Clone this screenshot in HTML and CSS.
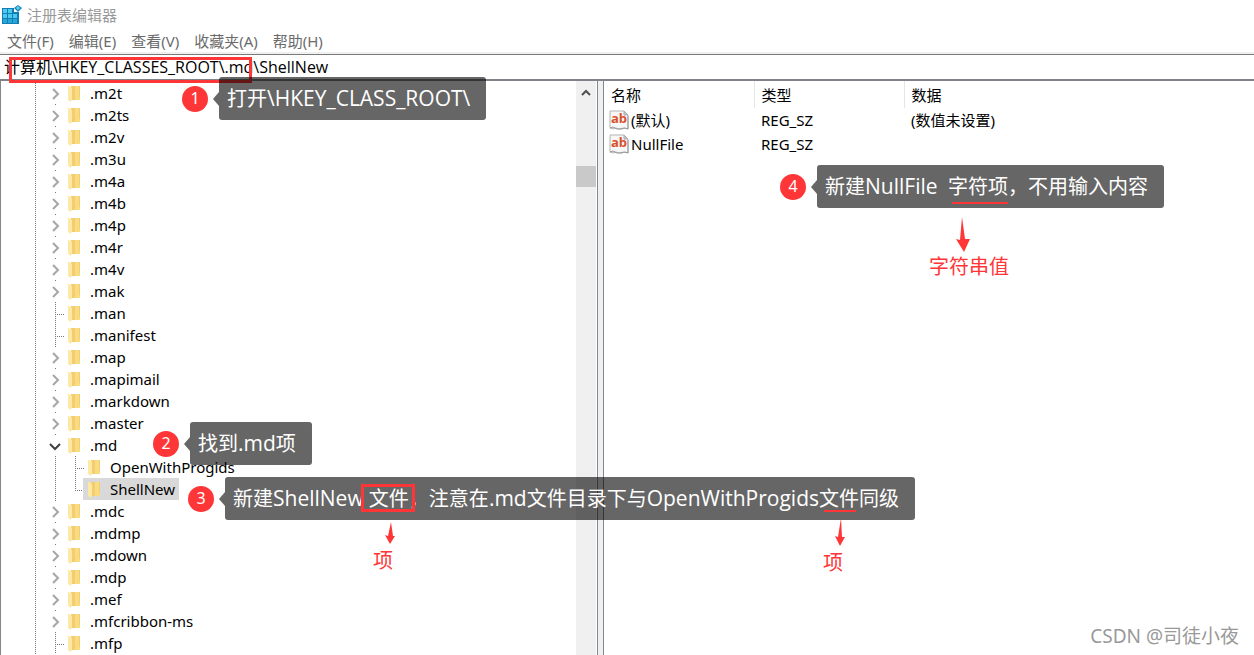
FILE: index.html
```html
<!DOCTYPE html>
<html lang="zh-CN">
<head>
    <meta charset="UTF-8">
    <meta name="viewport" content="width=device-width, initial-scale=1.0">
    <title>注册表编辑器</title>
    <link rel="stylesheet" href="styles.css">
</head>
<body>
    <svg class="symbols" aria-hidden="true">
        <symbol id="chevron" viewBox="0 0 12 12">
            <path d="M4 1l5 5-5 5" fill="none" stroke="#a6a6a6" stroke-width="2"/>
        </symbol>
        <symbol id="chevron-open" viewBox="0 0 12 12">
            <path d="M1 4l5 5 5-5" fill="none" stroke="#404040" stroke-width="2"/>
        </symbol>
        <symbol id="folder" viewBox="0 0 12 17">
            <path d="M3 1h9v14H3z" fill="#f3cd72"/>
            <path d="M7 1h4v11h1v3H7z" fill="#fadc80"/>
            <path d="M0 1h1l3 2v11l-1 3-3-2z" fill="#ffe8a2"/>
        </symbol>
    </svg>

    <div class="window">
        <header class="title-bar">
            <svg class="app-icon" viewBox="0 0 20 20" aria-hidden="true">
                <path d="M0 3h12v4h5v12H0z" fill="#0f7fb5"/>
                <path d="M1 4h4v4H1zM6 4h4v4H6zM1 9h4v4H1zM6 9h4v4H6zM11 9h4v4h-4z" fill="#4fc9ee"/>
                <path d="M1 14h4v4H1zM6 14h4v4H6zM11 14h4v4h-4z" fill="#2aa5d8"/>
                <path d="M12 3l4-3 4 3-4 4z" fill="#1788bd"/>
                <path d="M14 3l2-2 2 2-2 2z" fill="#63d0f0"/>
            </svg>
            <span>注册表编辑器</span>
        </header>
        <nav class="menu-bar">
            <button type="button">文件(F)</button>
            <button type="button">编辑(E)</button>
            <button type="button">查看(V)</button>
            <button type="button">收藏夹(A)</button>
            <button type="button">帮助(H)</button>
        </nav>
        <input class="address" type="text" aria-label="地址" value="计算机\HKEY_CLASSES_ROOT\.md\ShellNew">

        <main class="panes">
            <section class="tree-pane">
                <ul class="tree">
                    <li><div class="row"><button class="toggle"><svg><use href="#chevron"/></svg></button><svg class="folder"><use href="#folder"/></svg><span class="key">.m2t</span></div></li>
                    <li><div class="row"><button class="toggle"><svg><use href="#chevron"/></svg></button><svg class="folder"><use href="#folder"/></svg><span class="key">.m2ts</span></div></li>
                    <li><div class="row"><button class="toggle"><svg><use href="#chevron"/></svg></button><svg class="folder"><use href="#folder"/></svg><span class="key">.m2v</span></div></li>
                    <li><div class="row"><button class="toggle"><svg><use href="#chevron"/></svg></button><svg class="folder"><use href="#folder"/></svg><span class="key">.m3u</span></div></li>
                    <li><div class="row"><button class="toggle"><svg><use href="#chevron"/></svg></button><svg class="folder"><use href="#folder"/></svg><span class="key">.m4a</span></div></li>
                    <li><div class="row"><button class="toggle"><svg><use href="#chevron"/></svg></button><svg class="folder"><use href="#folder"/></svg><span class="key">.m4b</span></div></li>
                    <li><div class="row"><button class="toggle"><svg><use href="#chevron"/></svg></button><svg class="folder"><use href="#folder"/></svg><span class="key">.m4p</span></div></li>
                    <li><div class="row"><button class="toggle"><svg><use href="#chevron"/></svg></button><svg class="folder"><use href="#folder"/></svg><span class="key">.m4r</span></div></li>
                    <li><div class="row"><button class="toggle"><svg><use href="#chevron"/></svg></button><svg class="folder"><use href="#folder"/></svg><span class="key">.m4v</span></div></li>
                    <li><div class="row"><button class="toggle"><svg><use href="#chevron"/></svg></button><svg class="folder"><use href="#folder"/></svg><span class="key">.mak</span></div></li>
                    <li><div class="row"><span class="branch"></span><svg class="folder"><use href="#folder"/></svg><span class="key">.man</span></div></li>
                    <li><div class="row"><span class="branch"></span><svg class="folder"><use href="#folder"/></svg><span class="key">.manifest</span></div></li>
                    <li><div class="row"><button class="toggle"><svg><use href="#chevron"/></svg></button><svg class="folder"><use href="#folder"/></svg><span class="key">.map</span></div></li>
                    <li><div class="row"><button class="toggle"><svg><use href="#chevron"/></svg></button><svg class="folder"><use href="#folder"/></svg><span class="key">.mapimail</span></div></li>
                    <li><div class="row"><button class="toggle"><svg><use href="#chevron"/></svg></button><svg class="folder"><use href="#folder"/></svg><span class="key">.markdown</span></div></li>
                    <li><div class="row"><button class="toggle"><svg><use href="#chevron"/></svg></button><svg class="folder"><use href="#folder"/></svg><span class="key">.master</span></div></li>
                    <li>
                        <div class="row"><button class="toggle"><svg><use href="#chevron-open"/></svg></button><svg class="folder"><use href="#folder"/></svg><span class="key">.md</span></div>
                        <ul class="subtree">
                            <li><div class="row"><span class="branch"></span><svg class="folder"><use href="#folder"/></svg><span class="key">OpenWithProgids</span></div></li>
                            <li><div class="row"><span class="branch last"></span><span class="selected"><svg class="folder"><use href="#folder"/></svg><span class="key">ShellNew</span></span></div></li>
                        </ul>
                    </li>
                    <li><div class="row"><button class="toggle"><svg><use href="#chevron"/></svg></button><svg class="folder"><use href="#folder"/></svg><span class="key">.mdc</span></div></li>
                    <li><div class="row"><button class="toggle"><svg><use href="#chevron"/></svg></button><svg class="folder"><use href="#folder"/></svg><span class="key">.mdmp</span></div></li>
                    <li><div class="row"><button class="toggle"><svg><use href="#chevron"/></svg></button><svg class="folder"><use href="#folder"/></svg><span class="key">.mdown</span></div></li>
                    <li><div class="row"><button class="toggle"><svg><use href="#chevron"/></svg></button><svg class="folder"><use href="#folder"/></svg><span class="key">.mdp</span></div></li>
                    <li><div class="row"><button class="toggle"><svg><use href="#chevron"/></svg></button><svg class="folder"><use href="#folder"/></svg><span class="key">.mef</span></div></li>
                    <li><div class="row"><button class="toggle"><svg><use href="#chevron"/></svg></button><svg class="folder"><use href="#folder"/></svg><span class="key">.mfcribbon-ms</span></div></li>
                    <li><div class="row"><span class="branch"></span><svg class="folder"><use href="#folder"/></svg><span class="key">.mfp</span></div></li>
                </ul>
                <div class="scrollbar">
                    <svg class="scroll-up" viewBox="0 0 12 12" aria-hidden="true"><path d="M2 8l4-4 4 4" fill="none" stroke="#505050" stroke-width="2"/></svg>
                    <div class="thumb"></div>
                </div>
            </section>
            <div class="splitter"></div>
            <section class="value-pane">
                <table class="values">
                    <thead>
                        <tr><th class="name">名称</th><th class="type">类型</th><th>数据</th></tr>
                    </thead>
                    <tbody>
                        <tr>
                            <td>
                                <div class="value-name">
                                    <svg viewBox="0 0 20 20">
                                        <path d="M1 1h14l4 4v14l-3-1-3 1-3 0-3-1-3 1-3-1z" fill="#f7f7f7" stroke="#b5b5b5"/>
                                        <path d="M15 1v4h4z" fill="#c8c8c8" stroke="#aaa"/>
                                        <path d="M1 18l3-1 4 2h3l4-1 4 1V6" fill="none" stroke="#999"/>
                                        <text x="10" y="13" text-anchor="middle" class="string-glyph">ab</text>
                                    </svg>
                                    (默认)
                                </div>
                            </td>
                            <td>REG_SZ</td>
                            <td>(数值未设置)</td>
                        </tr>
                        <tr>
                            <td>
                                <div class="value-name">
                                    <svg viewBox="0 0 20 20">
                                        <path d="M1 1h14l4 4v14l-3-1-3 1-3 0-3-1-3 1-3-1z" fill="#f7f7f7" stroke="#b5b5b5"/>
                                        <path d="M15 1v4h4z" fill="#c8c8c8" stroke="#aaa"/>
                                        <path d="M1 18l3-1 4 2h3l4-1 4 1V6" fill="none" stroke="#999"/>
                                        <text x="10" y="13" text-anchor="middle" class="string-glyph">ab</text>
                                    </svg>
                                    NullFile
                                </div>
                            </td>
                            <td>REG_SZ</td>
                            <td></td>
                        </tr>
                    </tbody>
                </table>
            </section>
        </main>
    </div>

    <!-- tutorial notes over the window -->
    <div class="frame frame-path"></div>

    <div class="note note-1"><span class="badge">1</span><div class="bubble">打开<span class="latin">\HKEY_CLASS_ROOT\</span></div></div>
    <div class="note note-2"><span class="badge">2</span><div class="bubble">找到<span class="latin">.md</span>项</div></div>
    <div class="note note-3"><span class="badge">3</span><div class="bubble">新建<span class="latin">ShellNew</span> 文件，注意在<span class="latin">.md</span>文件目录下与<span class="latin">OpenWithProgids</span>文件同级</div></div>
    <div class="note note-4"><span class="badge">4</span><div class="bubble">新建<span class="latin">NullFile</span>  字符项，不用输入内容</div></div>

    <div class="frame frame-file"></div>
    <div class="underline underline-file"></div>
    <div class="underline underline-string"></div>

    <div class="fix fix-a">
        <svg width="10" height="24" viewBox="0 0 10 24"><path d="M6 0l2 14h2L5 22 0 13l3 1z" fill="#ff3638"/></svg>
        <span>项</span>
    </div>
    <div class="fix fix-b">
        <svg width="10" height="30" viewBox="0 0 10 30"><path d="M6 0l1 19h3L5 28 0 18l3 1z" fill="#ff3638"/></svg>
        <span>项</span>
    </div>
    <div class="fix fix-c">
        <svg width="14" height="35" viewBox="0 0 14 35"><path d="M6 0l3 22h5L8 35 0 22l4 1z" fill="#ff3638"/></svg>
        <span>字符串值</span>
    </div>

    <div class="watermark">CSDN @司徒小夜</div>
</body>
</html>
```

FILE: styles.css
```css
* {
    box-sizing: border-box;
}
body {
    margin: 0;
    height: 100vh;
    overflow: hidden;
    position: relative;
    background-color: #fff;
    color: #000;
    font-family: "Noto Sans", "Noto Sans CJK SC", sans-serif;
    font-size: 15px;
    line-height: 22px;
}
button,
input {
    font: inherit;
    border: none;
    background: none;
    padding: 0;
}
ul {
    list-style: none;
    margin: 0;
    padding: 0;
}
.symbols {
    position: absolute;
    width: 0;
    height: 0;
}
.window {
    display: flex;
    flex-direction: column;
    height: 100vh;
}

/* title, menu, address */
.title-bar {
    display: flex;
    align-items: center;
    gap: 5px;
    height: 30px;
    padding-left: 2px;
    color: #999;
}
.app-icon {
    width: 20px;
    height: 20px;
}
.menu-bar {
    display: flex;
    gap: 1px;
    height: 24px;
    border-bottom: 2px solid #f0f0f0;
}
.menu-bar button {
    padding: 0 7px;
    color: #6b6b6b;
}
.address {
    width: 100%;
    height: 27px;
    padding: 0 4px 2px;
    border-top: 1px solid #7a7a7a;
    border-bottom: 2px solid #7f8288;
    font-family: "Open Sans", "Noto Sans CJK SC", sans-serif;
    font-size: 16px;
}

/* panes */
.panes {
    display: flex;
    flex: 1;
    min-height: 0;
}
.tree-pane {
    display: flex;
    flex: 0 0 598px;
    border-left: 1px solid #828790;
    border-right: 1px solid #828790;
    overflow: hidden;
}
.splitter {
    width: 5px;
    background-color: #f0f0f0;
}
.value-pane {
    flex: 1;
    border-left: 1px solid #828790;
}
.tree {
    flex: 1;
    padding-top: 1px;
    padding-left: 44px;
    background: repeating-linear-gradient(#777 0 1px, transparent 1px 2px) 34px 0 / 1px 100% no-repeat;
}
.row {
    display: flex;
    align-items: center;
    height: 22px;
}
.toggle,
.branch {
    width: 20px;
    height: 22px;
    background: repeating-linear-gradient(#777 0 1px, transparent 1px 2px) 10px 0 / 1px 100% no-repeat;
}
.branch {
    margin-right: 3px;
    background:
        repeating-linear-gradient(#777 0 1px, transparent 1px 2px) 10px 0 / 1px 100% no-repeat,
        repeating-linear-gradient(90deg, #777 0 1px, transparent 1px 2px) 10px 12px / 9px 1px no-repeat;
}
.branch.last {
    margin-right: 0;
    background-size: 1px 12px, 9px 1px;
}
.toggle {
    display: flex;
    align-items: center;
    justify-content: center;
    margin-right: 3px;
}
.toggle svg {
    width: 14px;
    height: 20px;
    padding: 5px 1px 3px;
    background-color: #fff;
}
.folder {
    width: 12px;
    height: 17px;
}
.key {
    padding: 0 4px 0 10px;
}
.subtree {
    padding-left: 20px;
    background: repeating-linear-gradient(#777 0 1px, transparent 1px 2px) 10px 0 / 1px 100% no-repeat;
}
.selected {
    display: flex;
    align-items: center;
    height: 22px;
    margin-left: -2px;
    padding-left: 5px;
    background-color: #d9d9d9;
}
.scrollbar {
    display: flex;
    flex-direction: column;
    align-items: center;
    width: 20px;
    margin-right: 1px;
    padding-top: 6px;
    background-color: #f0f0f0;
}
.scroll-up {
    width: 12px;
    height: 12px;
}
.thumb {
    width: 100%;
    height: 21px;
    margin-top: 67px;
    background-color: #c9c9c9;
}

/* values */
.values {
    width: 100%;
    border-collapse: collapse;
    table-layout: fixed;
}
.values th,
.values td {
    height: 24px;
    padding: 0 0 0 7px;
    text-align: left;
    font-weight: normal;
}
.values th {
    height: 27px;
    border-right: 1px solid #e5e5e5;
}
.values th.name,
.values th.type {
    width: 150px;
}
.values th:last-child {
    border-right: none;
}
.values td:first-child {
    padding-left: 5px;
}
.value-name {
    display: flex;
    align-items: center;
    gap: 2px;
}
.value-name svg {
    width: 20px;
    height: 20px;
}
.string-glyph {
    font-family: "Open Sans", sans-serif;
    font-size: 13px;
    font-weight: bold;
    fill: #d9502e;
}

/* notes */
.note {
    position: absolute;
    display: flex;
    align-items: center;
    gap: 11px;
}
.note-1 { left: 182px; top: 77px; }
.note-2 { left: 153px; top: 422px; }
.note-3 { left: 188px; top: 477px; }
.note-4 { left: 780px; top: 165px; }
.badge {
    width: 26px;
    height: 26px;
    border-radius: 50%;
    background-color: #ff3638;
    color: #fff;
    font-size: 16px;
    line-height: 24px;
    text-align: center;
}
.bubble {
    position: relative;
    height: 43px;
    padding: 0 16px 0 8px;
    border-radius: 3px;
    background-color: rgba(0, 0, 0, 0.6);
    color: #fff;
    font-size: 20px;
    line-height: 43px;
    white-space: pre;
}
.bubble::before {
    content: "";
    position: absolute;
    left: -6px;
    top: 15px;
    border: 7px solid transparent;
    border-left-width: 0;
    border-right: 6px solid rgba(0, 0, 0, 0.6);
}
.latin {
    font-family: "Open Sans", sans-serif;
    font-size: 21px;
}
.frame {
    position: absolute;
    border: 3px solid #ff3638;
}
.frame-path {
    left: 9px;
    top: 57px;
    width: 243px;
    height: 26px;
}
.frame-file {
    left: 361px;
    top: 484px;
    width: 54px;
    height: 28px;
}
.underline {
    position: absolute;
    height: 2px;
    background-color: #ff3638;
}
.underline-file {
    left: 824px;
    top: 510px;
    width: 32px;
}
.underline-string {
    left: 952px;
    top: 202px;
    width: 56px;
}
.fix {
    position: absolute;
    display: flex;
    flex-direction: column;
    align-items: flex-start;
    color: #ff3638;
    font-size: 20px;
    line-height: 30px;
}
.fix svg {
    margin-left: 12px;
}
.fix-c svg {
    margin-left: 27px;
}
.fix-a { left: 373px; top: 522px; }
.fix-b { left: 823px; top: 518px; }
.fix-c { left: 929px; top: 217px; }
.watermark {
    position: absolute;
    right: 15px;
    bottom: 4px;
    color: #999;
    font-size: 19px;
    line-height: 30px;
}
```
